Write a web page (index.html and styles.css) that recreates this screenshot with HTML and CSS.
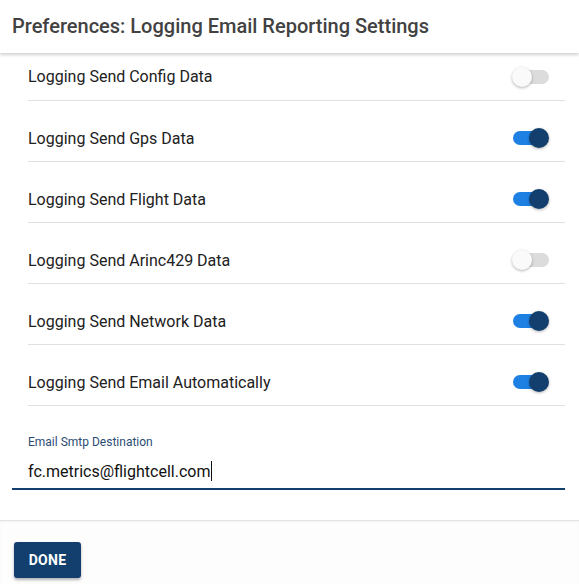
FILE: index.html
```html
<!DOCTYPE html>
<html>
<head>
<meta charset="utf-8">
<link rel="stylesheet" href="styles.css">
</head>
<body>
<div class="dialog">
  <header class="title-bar">Preferences: Logging Email Reporting Settings</header>
  <div class="content">
    <ul class="list">
      <li class="row first"><span>Logging Send Config Data</span><span class="switch"><span class="track"></span><span class="thumb"></span></span></li>
      <li class="row"><span>Logging Send Gps Data</span><span class="switch on"><span class="track"></span><span class="thumb"></span></span></li>
      <li class="row"><span>Logging Send Flight Data</span><span class="switch on"><span class="track"></span><span class="thumb"></span></span></li>
      <li class="row"><span>Logging Send Arinc429 Data</span><span class="switch"><span class="track"></span><span class="thumb"></span></span></li>
      <li class="row"><span>Logging Send Network Data</span><span class="switch on"><span class="track"></span><span class="thumb"></span></span></li>
      <li class="row"><span>Logging Send Email Automatically</span><span class="switch on"><span class="track"></span><span class="thumb"></span></span></li>
    </ul>
    <div class="field">
      <label class="field-label">Email Smtp Destination</label>
      <div class="field-value">fc.metrics@flightcell.com<span class="caret"></span></div>
    </div>
  </div>
  <footer class="actions">
    <button class="done">DONE</button>
  </footer>
</div>
</body>
</html>
```
FILE: styles.css
```css
html, body {
  margin: 0;
  padding: 0;
  background: #ffffff;
  font-family: Roboto, "Liberation Sans", sans-serif;
}
.dialog {
  width: 579px;
  height: 584px;
  display: flex;
  flex-direction: column;
  overflow: hidden;
}
.title-bar {
  height: 53px;
  box-sizing: border-box;
  padding: 14px 12px 0 12px;
  font-size: 20px;
  font-weight: 500;
  line-height: 24px;
  color: #424242;
  background: #fff;
  box-shadow: 0 2px 3px rgba(0,0,0,0.18);
  position: relative;
  z-index: 2;
}
.content {
  flex: 0 0 auto;
}
.list {
  list-style: none;
  margin: 0;
  padding: 0 14px 0 28px;
}
.row {
  display: flex;
  align-items: center;
  justify-content: space-between;
  height: 61px;
  padding-top: 14px;
  box-sizing: border-box;
  border-bottom: 1px solid #e0e0e0;
  font-size: 16px;
  color: #212121;
}
.row.first {
  height: 48px;
  padding-top: 0;
}
.switch {
  position: relative;
  width: 38px;
  height: 20px;
  margin-right: 15px;
}
.track {
  position: absolute;
  left: 1px;
  top: 3px;
  width: 36px;
  height: 14px;
  border-radius: 7px;
  background: #dcdcdc;
}
.thumb {
  position: absolute;
  left: 0;
  top: 0;
  width: 20px;
  height: 20px;
  border-radius: 50%;
  background: #fafafa;
  box-shadow: 0 1px 3px rgba(0,0,0,0.3);
}
.switch.on .track {
  background: #1e80e2;
  width: 30px;
}
.switch.on .thumb {
  left: 17px;
  background: #123f6e;
}
.field {
  margin: 0 14px 0 12px;
  padding: 28px 0 0 16px;
  border-bottom: 2px solid #123f6e;
  height: 84px;
  box-sizing: border-box;
}
.field-label {
  display: block;
  font-size: 12px;
  line-height: 16px;
  color: #2b4d74;
}
.field-value {
  margin-top: 11px;
  font-size: 16px;
  line-height: 20px;
  color: #111;
}
.caret {
  display: inline-block;
  width: 1px;
  height: 20px;
  background: #111;
  vertical-align: -4px;
  margin-left: 1px;
}
.actions {
  margin-top: 30px;
  border-top: 1px solid #e3e3e3;
  box-shadow: inset 0 1px 2px rgba(0,0,0,0.04);
  background: #fdfdfd;
  flex: 1;
  padding: 21px 14px 0 14px;
}
.done {
  width: 67px;
  height: 36px;
  border: none;
  border-radius: 3px;
  background: #123f6e;
  color: #fff;
  font-family: Roboto, "Liberation Sans", sans-serif;
  font-size: 14px;
  font-weight: 700;
  letter-spacing: 0.3px;
  box-shadow: 0 2px 3px rgba(0,0,0,0.3);
  padding: 0;
}
```
